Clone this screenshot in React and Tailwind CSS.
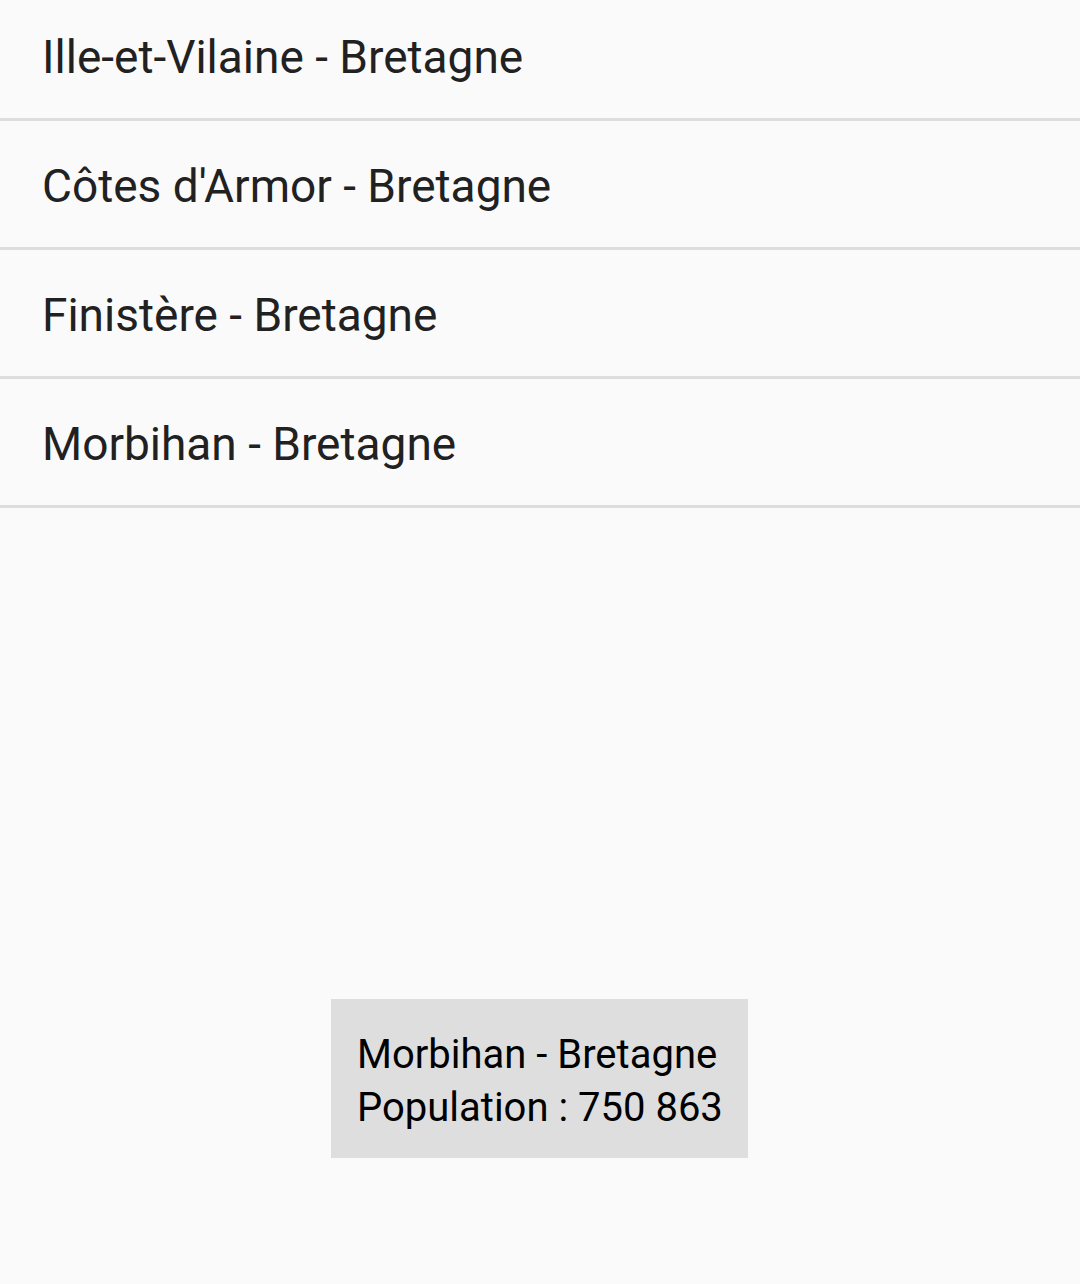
const departements = [
  { name: "Ille-et-Vilaine - Bretagne", h: "h-[121px] pb-[2px]" },
  { name: "Côtes d'Armor - Bretagne", h: "h-[129px] pt-[5px]" },
  { name: "Finistère - Bretagne", h: "h-[129px] pt-[5px]" },
  { name: "Morbihan - Bretagne", h: "h-[129px] pt-[5px]" },
];

export default function App() {
  return (
    <div
      className="relative w-[1080px] h-[1284px] bg-[#fafafa] overflow-hidden"
      style={{ fontFamily: "Roboto, 'Noto Sans', sans-serif" }}
    >
      <ul>
        {departements.map((d) => (
          <li
            key={d.name}
            className={`${d.h} flex items-center pl-[42px] border-b-[3px] border-[#dddddd] text-[46px] leading-[1.17] text-[#212121]`}
          >
            {d.name}
          </li>
        ))}
      </ul>

      <div className="absolute left-[331px] top-[999px] w-[417px] h-[159px] bg-[#dedede] pl-[26px] pt-[29px] text-[40px] leading-[53px] text-black">
        <div>Morbihan - Bretagne</div>
        <div>Population : 750 863</div>
      </div>
    </div>
  );
}
